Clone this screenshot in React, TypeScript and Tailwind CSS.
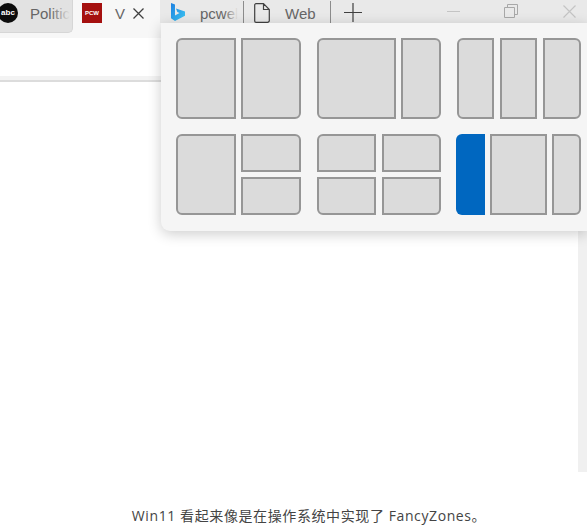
import React from "react";

const cell = "bg-[#dbdbdb] border-2 border-[#969696] box-border";

function Layouts() {
  return (
    <div className="absolute left-[161px] top-[23px] w-[426px] h-[208px] bg-[#f5f5f5] rounded-bl-[9px] shadow-[0_3px_14px_rgba(0,0,0,0.2)] pt-[15px] pl-[15px] flex flex-col gap-[15px]">
      <div className="flex gap-[16px] h-[81px]">
        <div className="flex gap-[5px]">
          <div className={`${cell} w-[60px] rounded-l-[6px]`} />
          <div className={`${cell} w-[60px] rounded-r-[6px]`} />
        </div>
        <div className="flex gap-[5px]">
          <div className={`${cell} w-[79px] rounded-l-[6px]`} />
          <div className={`${cell} w-[40px] rounded-r-[6px]`} />
        </div>
        <div className="flex gap-[6px]">
          <div className={`${cell} w-[37px] rounded-l-[6px]`} />
          <div className={`${cell} w-[37px]`} />
          <div className={`${cell} w-[38px] rounded-r-[6px]`} />
        </div>
      </div>
      <div className="flex gap-[15px] h-[81px]">
        <div className="flex gap-[5px] mr-px">
          <div className={`${cell} w-[60px] rounded-l-[6px]`} />
          <div className="flex flex-col gap-[5px] w-[60px]">
            <div className={`${cell} flex-1 rounded-tr-[6px]`} />
            <div className={`${cell} flex-1 rounded-br-[6px]`} />
          </div>
        </div>
        <div className="grid grid-cols-[59px_59px] grid-rows-2 gap-x-[6px] gap-y-[5px]">
          <div className={`${cell} rounded-tl-[6px]`} />
          <div className={`${cell} rounded-tr-[6px]`} />
          <div className={`${cell} rounded-bl-[6px]`} />
          <div className={`${cell} rounded-br-[6px]`} />
        </div>
        <div className="flex gap-[5px]">
          <div className="w-[29px] bg-[#0067c0] rounded-l-[6px]" />
          <div className={`${cell} w-[57px]`} />
          <div className={`${cell} w-[29px] rounded-r-[6px]`} />
        </div>
      </div>
    </div>
  );
}

function Fade({ className }: { className: string }) {
  return <div className={`absolute top-[2px] h-[22px] ${className}`} />;
}

function Tabs() {
  return (
    <div className="h-[38px] bg-[#f7f7f7] flex items-start text-[15px] text-[#666666] [font-family:'Liberation_Sans',sans-serif]">
      <div className="w-[73px] h-[33px] bg-[#e2e2e2] rounded-br-[5px] border-r border-b border-[#d6d6d6] relative overflow-hidden shrink-0">
        <div className="absolute left-[-2px] top-[3px] w-[20px] h-[20px] rounded-full bg-[#0c0c0c] text-white text-[8px] font-bold flex items-center justify-center">abc</div>
        <span className="absolute left-[30px] top-[3px]">Politic</span>
        <Fade className="left-[50px] w-[20px] bg-gradient-to-r from-transparent to-[#e2e2e2]" />
      </div>
      <div className="w-[87px] h-[38px] bg-[#f7f7f7] relative shrink-0">
        <div className="absolute left-[9px] top-[3px] w-[20px] h-[20px] bg-[#a5100f] text-white text-[6px] font-bold flex items-center justify-center">PCW</div>
        <span className="absolute left-[42px] top-[3px]">V</span>
        <svg className="absolute left-[60px] top-[8px]" width="11" height="11" viewBox="0 0 11 11" fill="none" stroke="#404040" strokeWidth="1.3"><path d="M0.500 0.500l10 10M10.500 0.500l-10 10" /></svg>
      </div>
      <div className="relative grow h-[23px] bg-[#e9e9e9]">
        <svg className="absolute left-[11px] top-[3px]" width="14" height="18" viewBox="0 0 14 18">
          <defs>
            <linearGradient id="bing" x1="0" y1="0" x2="1" y2="1">
              <stop offset="0" stopColor="#1b7fe0" />
              <stop offset="1" stopColor="#3fc8f2" />
            </linearGradient>
          </defs>
          <path d="M0 0l4 1.400v11.200l4.500-2.600-2.200-1L5 5.400l9 3.200v4.100L4 18l-4-2.800z" fill="url(#bing)" />
        </svg>
        <span className="absolute left-[40px] top-[3px] w-[38px] overflow-hidden">pcwel</span>
        <Fade className="left-[64px] w-[14px] bg-gradient-to-r from-transparent to-[#e9e9e9]" />
        <div className="absolute left-[83px] top-[1px] w-px h-[22px] bg-[#8c8c8c]" />
        <svg className="absolute left-[94px] top-[3px]" width="16" height="20" viewBox="0 0 16 20" fill="none" stroke="#404040" strokeWidth="1.2"><path d="M2 0.700h7.500l5.800 5.800v11a1.800 1.800 0 0 1-1.800 1.800H2a1.300 1.300 0 0 1-1.300-1.300V2A1.300 1.300 0 0 1 2 0.700zM9.500 0.700v5.800h5.800" /></svg>
        <span className="absolute left-[125px] top-[3px]">Web</span>
        <div className="absolute left-[170px] top-[1px] w-px h-[22px] bg-[#8c8c8c]" />
        <svg className="absolute left-[184px] top-[3px]" width="18" height="19" viewBox="0 0 18 19" stroke="#404040" strokeWidth="1.2"><path d="M0 9.500h18M9 0v19" /></svg>
        <div className="absolute left-[287px] top-[11px] w-[13px] h-px bg-[#c4c4c4]" />
        <svg className="absolute left-[344px] top-[4px]" width="14" height="14" viewBox="0 0 14 14" fill="none" stroke="#a8a8a8"><path d="M0.500 3.500h10v10h-10zM3.500 3V0.500h10V10.500h-3" /></svg>
        <svg className="absolute left-[403px] top-[5px]" width="13" height="13" viewBox="0 0 13 13" stroke="#c4c4c4" strokeWidth="1.200"><path d="M0.500 0.500l12 12M12.500 0.500l-12 12" /></svg>
      </div>
    </div>
  );
}

export default function App() {
  return (
    <div className="relative w-[587px] h-[527px] bg-white overflow-hidden flex flex-col">
      <Tabs />
      <div className="h-[38px] bg-white" />
      <div className="h-[6px] bg-[#f3f3f3] border-b-2 border-[#dcdcdc]" />
      <div className="h-[390px] flex justify-end">
        <div className="w-[9px] bg-[#f0f0f0]" />
      </div>
      <p className="pt-[34px] pl-[31px] text-center text-[14px] leading-[20px] tracking-[0.6px] text-[#444444] [font-family:'Open_Sans','Noto_Sans_CJK_SC',sans-serif]">
        Win11 看起来像是在操作系统中实现了 FancyZones。
      </p>
      <Layouts />
    </div>
  );
}
